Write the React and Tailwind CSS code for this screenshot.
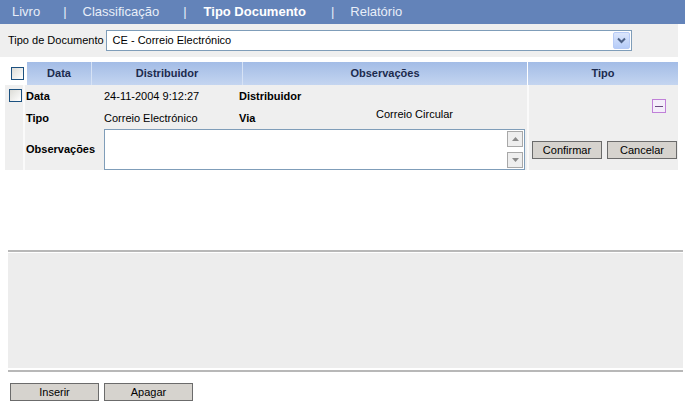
import React from "react";

const font = { fontFamily: '"Liberation Sans", Arial, sans-serif' };

function Check() {
  return <div className="w-[13px] h-[13px] border border-[#1c5180] bg-gradient-to-br from-[#dcdcd7] to-[#ffffff]" />;
}

function Btn({ children, w }) {
  return (
    <div className={`${w} h-[18px] bg-[#d6d3ce] border border-[#6b6b6b] flex items-center justify-center text-[11px] text-black`}>
      {children}
    </div>
  );
}

export default function App() {
  return (
    <div className="w-[685px] h-[403px] bg-white overflow-hidden relative" style={font}>
      {/* top nav */}
      <div className="h-[24px] bg-[#6383b9] flex items-center text-[13px] text-[#e8eef8] pl-[12px]">
        <span>Livro</span>
        <span className="ml-[23px]">|</span>
        <span className="ml-[16px]">Classificação</span>
        <span className="ml-[24px]">|</span>
        <span className="ml-[17px] font-bold text-white">Tipo Documento</span>
        <span className="ml-[25px]">|</span>
        <span className="ml-[16px]">Relatório</span>
      </div>
      {/* filter row */}
      <div className="w-[678px] h-[33px] bg-[#efefef] flex items-center pl-[8px] text-[11px] text-black">
        <span>Tipo de Documento</span>
        <div className="ml-[2px] w-[526px] h-[21px] bg-white border border-[#7f9db9] flex items-center justify-between pl-[6px] pr-[1px]">
          <span>CE - Correio Electrónico</span>
          <div className="w-[17px] h-[17px] bg-gradient-to-b from-[#dbe6fc] to-[#b6ccf8] border border-[#b7cbf6] rounded-[2px] flex items-center justify-center">
            <svg width="9" height="7" viewBox="0 0 9 7"><path d="M1 1.5 L4.5 5 L8 1.5" stroke="#4d6185" strokeWidth="2" fill="none" /></svg>
          </div>
        </div>
      </div>
      {/* table */}
      <div className="mt-[5px] flex text-[11px] text-black">
        <div className="w-[522px] ml-[5px]">
          {/* header */}
          <div className="flex h-[23px]">
            <div className="w-[22px] flex items-center justify-center pl-[2px]"><Check /></div>
            <div className="flex-1 flex bg-gradient-to-b from-[#a3bce6] to-[#c4d5f0] font-bold text-[#1c2b4e]">
              <div className="w-[65px] flex items-center justify-center border-r border-[#d6e2f5]">Data</div>
              <div className="w-[151px] flex items-center justify-center border-r border-[#d6e2f5]">Distribuidor</div>
              <div className="flex-1 flex items-center justify-center">Observações</div>
            </div>
          </div>
          {/* body */}
          <div className="flex bg-[#efefef] h-[85px]">
            <div className="w-[20px] border-r-2 border-[#fafafa] pt-[4px] pl-[4px]"><Check /></div>
            <div className="flex-1 flex flex-col">
              <div className="flex h-[22px] items-center">
                <span className="w-[79px] font-bold pl-[1px]">Data</span>
                <span className="w-[135px]">24-11-2004 9:12:27</span>
                <span className="font-bold">Distribuidor</span>
              </div>
              <div className="flex h-[22px] items-center">
                <span className="w-[79px] font-bold pl-[1px]">Tipo</span>
                <span className="w-[135px]">Correio Electrónico</span>
                <span className="w-[137px] font-bold">Via</span>
                <span className="-mt-[8px]">Correio Circular</span>
              </div>
              <div className="flex items-center h-[41px]">
                <span className="w-[79px] font-bold pl-[1px]">Observações</span>
                <div className="w-[421px] h-[41px] bg-white border border-[#7f9db9] flex justify-end items-stretch">
                  <div className="w-[17px] flex flex-col justify-between py-[1px] pr-[1px]">
                    <div className="h-[16px] border border-[#a8a8a8] bg-[#eeeeee] flex items-center justify-center">
                      <svg width="7" height="4" viewBox="0 0 7 4"><path d="M0 4 L3.5 0 L7 4 Z" fill="#8a8a8a" /></svg>
                    </div>
                    <div className="h-[16px] border border-[#a8a8a8] bg-[#eeeeee] flex items-center justify-center">
                      <svg width="7" height="4" viewBox="0 0 7 4"><path d="M0 0 L3.5 4 L7 0 Z" fill="#8a8a8a" /></svg>
                    </div>
                  </div>
                </div>
              </div>
            </div>
          </div>
        </div>
        {/* Tipo column */}
        <div className="w-[151px]">
          <div className="h-[23px] ml-[1px] w-[150px] bg-gradient-to-b from-[#a3bce6] to-[#c4d5f0] font-bold text-[#1c2b4e] flex items-center justify-center">Tipo</div>
          <div className="h-[85px] bg-[#efefef] border-l-2 border-[#fafafa] flex flex-col items-end">
            <div className="mt-[14px] mr-[12px] w-[14px] h-[14px] border border-[#c080d8] bg-[#f4eefa] flex items-center justify-center">
              <div className="w-[8px] h-[1px] bg-[#6a4a80]" />
            </div>
            <div className="mt-[28px] flex gap-[5px] self-start ml-[3px]">
              <Btn w="w-[70px]">Confirmar</Btn>
              <Btn w="w-[70px]">Cancelar</Btn>
            </div>
          </div>
        </div>
      </div>
      {/* bottom panel */}
      <div className="mt-[80px] ml-[8px] w-[675px] border-t-2 border-b-2 border-[#b8b8b8] h-[122px] bg-white pt-[1px] pb-[2px]">
        <div className="h-full bg-[#ededed]" />
      </div>
      <div className="mt-[11px] ml-[10px] flex gap-[5px]">
        <Btn w="w-[89px]">Inserir</Btn>
        <Btn w="w-[89px]">Apagar</Btn>
      </div>
    </div>
  );
}
